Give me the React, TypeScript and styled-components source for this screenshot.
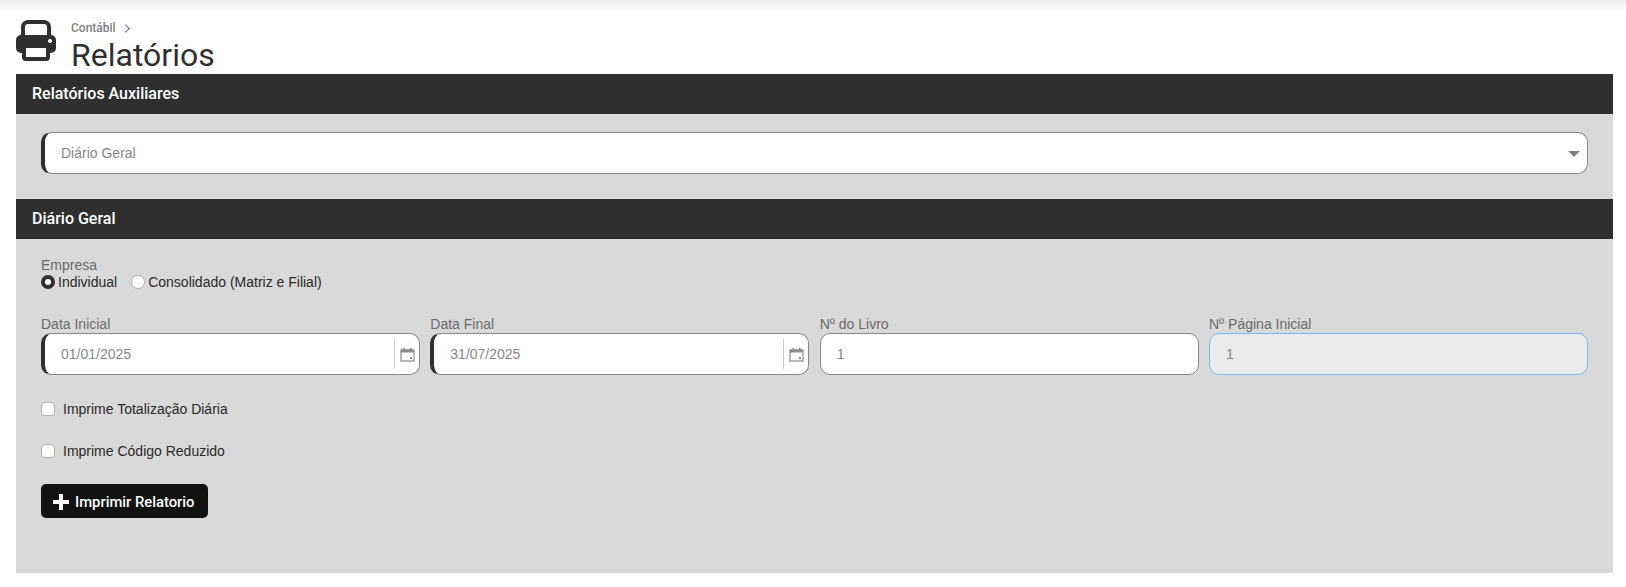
import React from 'react';
import styled, { createGlobalStyle } from 'styled-components';

const GlobalStyle = createGlobalStyle`
  html, body {
    margin: 0;
    padding: 0;
    background: #fff;
    font-family: "Liberation Sans", Arial, sans-serif;
  }
  * { box-sizing: border-box; }
`;

const Page = styled.div`
  width: 1626px;
  height: 587px;
  overflow: hidden;
  background: linear-gradient(#ececec 0, #f7f7f7 5px, #ffffff 13px);
  padding: 0 13px 0 16px;
`;

const PageHead = styled.header`
  height: 74px;
  display: flex;
  align-items: flex-start;
  padding-top: 20px;
  gap: 15px;
`;

const HeadText = styled.div`
  display: flex;
  flex-direction: column;
  font-family: Roboto, sans-serif;
`;

const Crumb = styled.div`
  font-size: 12px;
  line-height: 16px;
  color: #808080;
  font-weight: 500;
  display: flex;
  align-items: center;
  gap: 8px;
`;

const Title = styled.h1`
  margin: 0;
  font-size: 32px;
  line-height: 38px;
  font-weight: 400;
  color: #2f2f2f;
`;

const SectionBar = styled.div`
  height: 40px;
  background: #2f2f2f;
  color: #fff;
  font-family: Roboto, sans-serif;
  font-size: 16px;
  font-weight: 500;
  line-height: 40px;
  padding-left: 16px;
`;

const SelectBody = styled.div`
  background: #d9d9d9;
  height: 85px;
  padding: 18px 25px 0;
`;

const FormBody = styled.div`
  background: #d9d9d9;
  height: 334px;
  padding: 18px 25px 0;
`;

const FieldBox = styled.div<{ $marked?: boolean; $disabled?: boolean }>`
  height: 42px;
  display: flex;
  align-items: center;
  border-radius: 10px;
  border: 1px solid ${p => (p.$disabled ? '#7db5f5' : '#888888')};
  border-left: ${p => (p.$marked ? '4px solid #2f2f2f' : `1px solid ${p.$disabled ? '#7db5f5' : '#888888'}`)};
  background: ${p => (p.$disabled ? '#ebebeb' : '#fff')};
  padding-left: 16px;
  color: #878787;
  font-size: 14px;
`;

const FieldValue = styled.span`
  flex: 1;
`;

const Caret = styled.span`
  width: 0;
  height: 0;
  margin-right: 7px;
  margin-top: 1px;
  border-left: 6px solid transparent;
  border-right: 6px solid transparent;
  border-top: 6px solid #808080;
`;

const Label = styled.div`
  font-size: 14px;
  line-height: 16px;
  color: #6b6b6b;
`;

const RadioRow = styled.div`
  display: flex;
  align-items: center;
  height: 16px;
  margin-top: 1px;
  font-size: 14px;
  color: #2a2a2a;
`;

const RadioDot = styled.span<{ $on?: boolean }>`
  width: 14px;
  height: 14px;
  border-radius: 50%;
  background: #fff;
  border: ${p => (p.$on ? '4px solid #2f2f2f' : '1px solid #b0b0b0')};
  margin-right: 3px;
  flex: none;
`;

const RadioLabel = styled.span`
  margin-right: 14px;
`;

const FieldGrid = styled.div`
  display: grid;
  grid-template-columns: repeat(4, 1fr);
  column-gap: 10.33px;
  margin-top: 26px;
`;

const Field = styled.div`
  display: flex;
  flex-direction: column;
  gap: 1px;
`;

const CalendarPart = styled.span`
  height: 30px;
  width: 25px;
  border-left: 1px solid #c9c9c9;
  display: flex;
  align-items: center;
  justify-content: center;
  margin-left: auto;
`;

const CheckRow = styled.label`
  display: flex;
  align-items: center;
  height: 16px;
  font-size: 14px;
  color: #2a2a2a;
  margin-top: 26px;
`;

const CheckBox = styled.span`
  width: 14px;
  height: 14px;
  border-radius: 4px;
  background: #fff;
  border: 1px solid #b0b0b0;
  margin-right: 8px;
`;

const PrintButton = styled.button`
  display: flex;
  align-items: center;
  gap: 6px;
  height: 34px;
  width: 167px;
  margin-top: 25px;
  padding: 2px 0 0 12px;
  border: none;
  border-radius: 5px;
  background: #121212;
  color: #fff;
  font: 500 14.8px Roboto, sans-serif;
`;

const Printer = () => (
  <svg width="40" height="42" viewBox="0 0 40 42" style={{ flex: 'none' }}>
    <path d="M7 17V7a5 5 0 0 1 5-5h16a5 5 0 0 1 5 5v10" fill="none" stroke="#2f2f2f" strokeWidth="4" />
    <path
      fillRule="evenodd"
      fill="#2f2f2f"
      d="M5 15h30a5 5 0 0 1 5 5v8a5 5 0 0 1-5 5h-1v4a4 4 0 0 1-4 4H10a4 4 0 0 1-4-4v-4H5a5 5 0 0 1-5-5v-8a5 5 0 0 1 5-5zM10 28v9h20v-9zM34 19a2 2 0 1 0 .01 0z"
    />
  </svg>
);

const Chevron = () => (
  <svg width="7" height="9" viewBox="0 0 7 9" fill="none">
    <path d="M1 .8l4.500 3.700L1 8.200" stroke="#808080" strokeWidth="1.200" />
  </svg>
);

const Calendar = () => (
  <svg width="15" height="15" viewBox="0 0 15 15" fill="none">
    <rect x="1" y="3" width="13" height="11" stroke="#8a8a8a" strokeWidth="1.2" />
    <rect x="1" y="2.500" width="13" height="3" fill="#8a8a8a" />
    <rect x="3.500" y="1" width="1.500" height="2.500" fill="#8a8a8a" />
    <rect x="10" y="1" width="1.500" height="2.500" fill="#8a8a8a" />
    <rect x="10" y="10" width="2" height="2" fill="#8a8a8a" />
  </svg>
);

const Plus = () => (
  <svg width="16" height="16" viewBox="0 0 16 16">
    <path d="M6 0h4v6h6v4h-6v6H6v-6H0V6h6z" fill="#fff" />
  </svg>
);

export default function App() {
  return (
    <Page>
      <GlobalStyle />
      <PageHead>
        <Printer />
        <HeadText>
          <Crumb>
            <span>Contábil</span>
            <Chevron />
          </Crumb>
          <Title>Relatórios</Title>
        </HeadText>
      </PageHead>

      <SectionBar>Relatórios Auxiliares</SectionBar>
      <SelectBody>
        <FieldBox $marked>
          <FieldValue>Diário Geral</FieldValue>
          <Caret />
        </FieldBox>
      </SelectBody>

      <SectionBar>Diário Geral</SectionBar>
      <FormBody>
        <Label>Empresa</Label>
        <RadioRow>
          <RadioDot $on />
          <RadioLabel>Individual</RadioLabel>
          <RadioDot />
          <RadioLabel>Consolidado (Matriz e Filial)</RadioLabel>
        </RadioRow>

        <FieldGrid>
          <Field>
            <Label>Data Inicial</Label>
            <FieldBox $marked>
              <FieldValue>01/01/2025</FieldValue>
              <CalendarPart><Calendar /></CalendarPart>
            </FieldBox>
          </Field>
          <Field>
            <Label>Data Final</Label>
            <FieldBox $marked>
              <FieldValue>31/07/2025</FieldValue>
              <CalendarPart><Calendar /></CalendarPart>
            </FieldBox>
          </Field>
          <Field>
            <Label>Nº do Livro</Label>
            <FieldBox>
              <FieldValue>1</FieldValue>
            </FieldBox>
          </Field>
          <Field>
            <Label>Nº Página Inicial</Label>
            <FieldBox $disabled>
              <FieldValue>1</FieldValue>
            </FieldBox>
          </Field>
        </FieldGrid>

        <CheckRow>
          <CheckBox />
          Imprime Totalização Diária
        </CheckRow>
        <CheckRow>
          <CheckBox />
          Imprime Código Reduzido
        </CheckRow>

        <PrintButton>
          <Plus />
          Imprimir Relatorio
        </PrintButton>
      </FormBody>
    </Page>
  );
}
